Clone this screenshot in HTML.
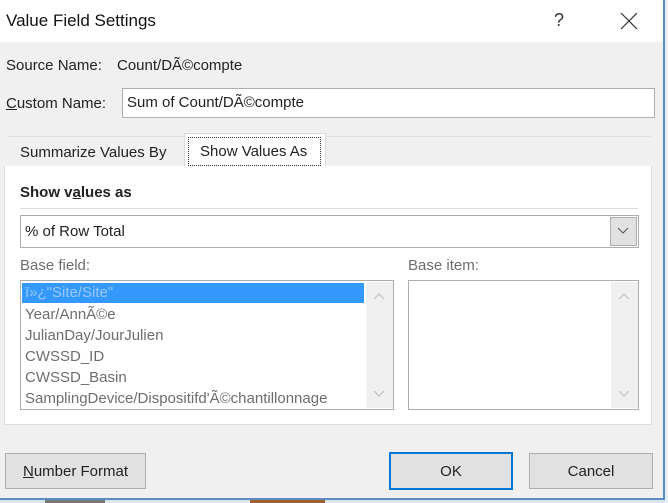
<!DOCTYPE html>
<html><head><meta charset="utf-8"><style>
*{box-sizing:border-box;margin:0;padding:0}
body{width:668px;height:503px;overflow:hidden;background:#f0f0f0;font-family:"Liberation Sans",sans-serif;font-size:15px;color:#222;position:relative}
.a{position:absolute}
u{text-decoration:underline}
</style></head><body>
<div class="a" style="left:0;top:0;width:663px;height:42px;background:#fff"></div>
<div class="a" style="left:6px;top:11px;font-size:17px;color:#111">Value Field Settings</div>
<div class="a" style="left:554px;top:10px;font-size:18px;color:#333">?</div>
<svg class="a" style="left:620px;top:12px" width="18" height="18"><path d="M1 1L17 17M17 1L1 17" stroke="#333" stroke-width="1.2"/></svg>
<div class="a" style="left:663px;top:0;width:2px;height:503px;background:#5b8cc4"></div>
<div class="a" style="left:665px;top:0;width:3px;height:503px;background:#e8eef5"></div>
<div class="a" style="left:0;top:498px;width:665px;height:2px;background:#5b8cc4"></div>
<div class="a" style="left:0;top:500px;width:665px;height:3px;background:#dce4ec"></div>
<div class="a" style="left:45px;top:500px;width:60px;height:3px;background:#777"></div>
<div class="a" style="left:250px;top:500px;width:75px;height:3px;background:#a0602a"></div>

<div class="a" style="left:6px;top:57px">Source Name:</div>
<div class="a" style="left:117px;top:57px">Count/DÃ©compte</div>
<div class="a" style="left:6px;top:95px"><u>C</u>ustom Name:</div>
<div class="a" style="left:122px;top:88px;width:533px;height:30px;background:#fff;border:1px solid #adadad;padding:5px 4px">Sum of Count/DÃ©compte</div>

<div class="a" style="left:7px;top:136px;width:644px;height:1px;background:#e0e0e0"></div>
<div class="a" style="left:20px;top:144px">Summarize Values By</div>
<div class="a" style="left:184px;top:133px;width:142px;height:34px;background:#fff;border:1px solid #d9d9d9;border-bottom:none"></div>
<div class="a" style="left:188px;top:137px;width:133px;height:29px;border:1px dotted #333;padding:5px 0 0 11px">Show Values As</div>

<div class="a" style="left:4px;top:166px;width:648px;height:259px;background:#fff;border:1px solid #dcdcdc;border-top:none"></div>
<div class="a" style="left:20px;top:184px;font-weight:bold">Show v<u>a</u>lues as</div>
<div class="a" style="left:20px;top:208px;width:618px;height:1px;background:#dcdcdc"></div>
<div class="a" style="left:20px;top:215px;width:619px;height:33px;border:1px solid #adadad;padding:7px 4px">% of Row Total</div>
<div class="a" style="left:610px;top:217px;width:27px;height:29px;background:#e1e1e1;border:1px solid #adadad"></div>
<svg class="a" style="left:617px;top:227px" width="12" height="8"><path d="M1 1L6 6L11 1" stroke="#555" fill="none"/></svg>

<div class="a" style="left:20px;top:257px;color:#6d6d6d">Base field:</div>
<div class="a" style="left:408px;top:257px;color:#6d6d6d">Base item:</div>
<div class="a" style="left:20px;top:280px;width:374px;height:130px;border:1px solid #adadad;background:#fff"></div>
<div class="a" style="left:22px;top:283px;width:342px;height:20px;background:#3399ff;color:#9cc8f5;padding:1px 3px">ï»¿"Site/Site"</div>
<div class="a" style="left:25px;top:304px;color:#6d6d6d;line-height:21px">Year/AnnÃ©e<br>JulianDay/JourJulien<br>CWSSD_ID<br>CWSSD_Basin<br>SamplingDevice/Dispositifd'Ã©chantillonnage</div>
<div class="a" style="left:366px;top:282px;width:27px;height:126px;background:#f0f0f0"></div>
<svg class="a" style="left:373px;top:292px" width="12" height="8"><path d="M1 7L6 2L11 7" stroke="#bbb" fill="none"/></svg>
<svg class="a" style="left:373px;top:390px" width="12" height="8"><path d="M1 1L6 6L11 1" stroke="#bbb" fill="none"/></svg>
<div class="a" style="left:408px;top:280px;width:231px;height:130px;border:1px solid #adadad;background:#fff"></div>
<div class="a" style="left:611px;top:282px;width:27px;height:126px;background:#f0f0f0"></div>
<svg class="a" style="left:618px;top:292px" width="12" height="8"><path d="M1 7L6 2L11 7" stroke="#bbb" fill="none"/></svg>
<svg class="a" style="left:618px;top:390px" width="12" height="8"><path d="M1 1L6 6L11 1" stroke="#bbb" fill="none"/></svg>

<div class="a" style="left:5px;top:453px;width:141px;height:36px;background:#e1e1e1;border:1px solid #adadad;text-align:center;padding-top:9px;font-size:15px"><u>N</u>umber Format</div>
<div class="a" style="left:389px;top:452px;width:124px;height:38px;background:#e1e1e1;border:2px solid #0078d7;text-align:center;padding-top:9px;font-size:15px">OK</div>
<div class="a" style="left:529px;top:453px;width:124px;height:36px;background:#e1e1e1;border:1px solid #adadad;text-align:center;padding-top:9px;font-size:15px">Cancel</div>
</body></html>
